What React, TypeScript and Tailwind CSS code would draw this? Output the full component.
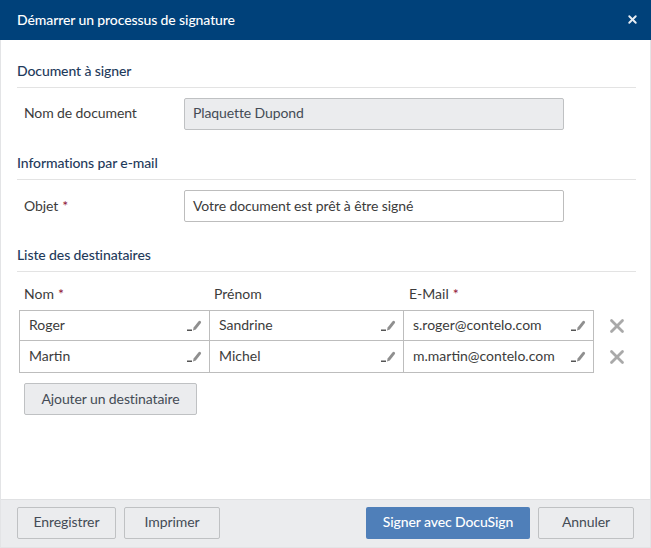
import { X } from "lucide-react";

const FONT = "font-['Lato','Noto_Sans',sans-serif]";

const PenIcon = () => (
  <svg width="15" height="11" viewBox="0 0 15 11" className="shrink-0">
    <rect x="0" y="9.5" width="5" height="1.5" fill="#555" />
    <path d="M6 10.5 L6.6 7.6 L11.6 1.2 Q12.4 0.4 13.4 1.1 Q14.6 2 13.9 3 L8.8 9.4 Z" fill="#8f8f8f" />
  </svg>
);

const Section = ({ title, children }: { title: string; children: React.ReactNode }) => (
  <section>
    <h2 className="h-[33px] leading-[31px] border-b border-[#e3e3e3] text-[14px] font-medium tracking-[-0.1px] text-[#1f3b5c]">{title}</h2>
    {children}
  </section>
);

const Required = () => <span className="ml-1 text-[#8f1437]">*</span>;

const recipients = [
  { nom: "Roger", prenom: "Sandrine", email: "s.roger@contelo.com" },
  { nom: "Martin", prenom: "Michel", email: "m.martin@contelo.com" },
];

const Cell = ({ value, width, last }: { value: string; width: string; last?: boolean }) => (
  <div className={`${width} ${last ? "" : "border-r border-[#bdbdbd]"} flex items-center justify-between pl-[9px] pr-[7px]`}>
    <span className="pb-[3px]">{value}</span>
    <PenIcon />
  </div>
);

const Button = ({ label, className }: { label: string; className: string }) => (
  <button className={`${className} h-[32px] rounded-[2px] border border-[#bfc1c3] bg-[#ebecee] text-[14px] tracking-[-0.1px] text-[#444b55]`}>
    {label}
  </button>
);

export default function App() {
  return (
    <div className={`${FONT} w-[651px] h-[548px] flex flex-col bg-white text-[14px] text-[#3c3c3c] border-x border-b border-[#e3e4e6]`}>
      {/* En-tête */}
      <header className="-mx-px h-[40px] shrink-0 flex items-center justify-between bg-[#00417a] pb-px pl-[17px] pr-[12px] text-white font-medium tracking-[-0.1px]">
        <span>Démarrer un processus de signature</span>
        <X size={13} strokeWidth={3.5} className="text-[#e8edf3]" />
      </header>

      <main className="flex-1 pl-[16px] pr-[14px] pt-[15px] flex flex-col">
        <Section title="Document à signer">
          <div className="flex items-center h-[32px] mt-[10px] pl-[7px] tracking-[-0.1px]">
            <span className="w-[160px] pb-[4px]">Nom de document</span>
            <div className="w-[380px] h-[32px] flex items-center px-[8px] pb-[4px] rounded-[2px] border border-[#bfc1c3] bg-[#ebecee] text-[#444b55]">
              Plaquette Dupond
            </div>
          </div>
        </Section>

        <div className="mt-[17px]">
          <Section title="Informations par e-mail">
            <div className="flex items-center h-[32px] mt-[10px] pl-[7px] tracking-[-0.1px]">
              <span className="w-[160px] pb-[2px]">
                Objet
                <Required />
              </span>
              <div className="w-[380px] h-[32px] flex items-center px-[8px] pb-[2px] rounded-[2px] border border-[#bdbdbd]">
                Votre document est prêt à être signé
              </div>
            </div>
          </Section>
        </div>

        <div className="mt-[17px]">
          <Section title="Liste des destinataires">
            <div className="flex h-[38px] items-end pb-[6px] pl-[7px]">
              <span className="w-[190px]">
                Nom
                <Required />
              </span>
              <span className="w-[195px]">Prénom</span>
              <span>
                E-Mail
                <Required />
              </span>
            </div>
            <div className="flex items-start">
              <div className="w-[575px] ml-[2px] border border-[#bdbdbd] divide-y divide-[#bdbdbd]">
                {recipients.map((r) => (
                  <div key={r.email} className="flex h-[30px] last:h-[31px]">
                    <Cell value={r.nom} width="w-[190px]" />
                    <Cell value={r.prenom} width="w-[194px]" />
                    <Cell value={r.email} width="flex-1" last />
                  </div>
                ))}
              </div>
              <div className="ml-[12px] flex flex-col">
                {recipients.map((r) => (
                  <div key={r.email} className="h-[31px] flex items-center">
                    <X size={22} strokeWidth={3} className="text-[#a9a9a9]" />
                  </div>
                ))}
              </div>
            </div>
            <div className="mt-[10px] ml-[7px]">
              <Button label="Ajouter un destinataire" className="w-[173px] pb-[2px]" />
            </div>
          </Section>
        </div>
      </main>

      {/* Pied de page */}
      <footer className="h-[48px] shrink-0 flex items-center bg-[#ebecee] border-t border-[#e0e1e3] pb-px pl-[16px] pr-[16px] gap-[8px]">
        <Button label="Enregistrer" className="w-[99px] pb-[4px]" />
        <Button label="Imprimer" className="w-[96px] pb-[4px]" />
        <button className="ml-auto w-[164px] h-[32px] pb-[4px] rounded-[2px] bg-[#4f7fb9] text-white font-medium tracking-[-0.1px]">
          Signer avec DocuSign
        </button>
        <Button label="Annuler" className="w-[96px] pb-[4px]" />
      </footer>
    </div>
  );
}
